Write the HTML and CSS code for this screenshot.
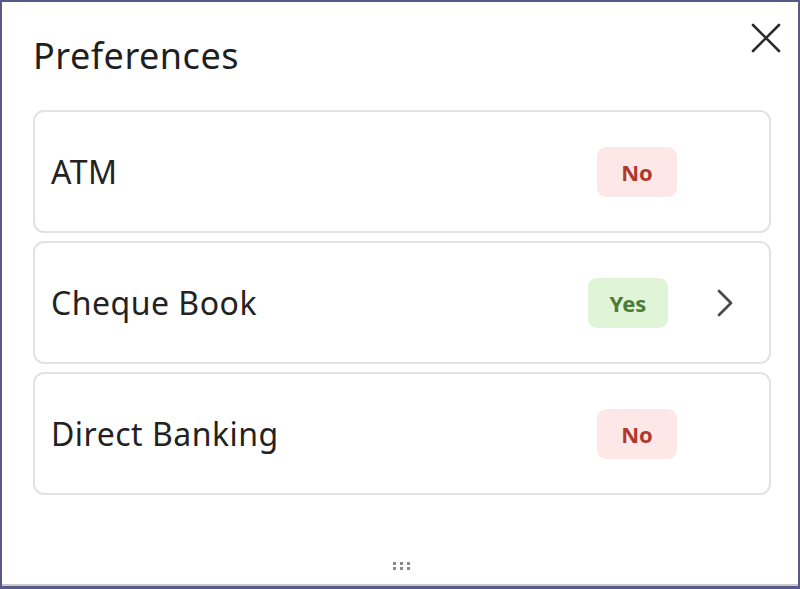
FILE: index.html
```html
<!DOCTYPE html>
<html>
<head>
<meta charset="utf-8">
<link rel="stylesheet" href="styles.css">
</head>
<body>
<div class="dialog">
  <div class="header">
    <h1 class="title">Preferences</h1>
    <button class="close" aria-label="Close">
      <svg width="30" height="30" viewBox="0 0 30 30"><path d="M2 2 L28 28 M28 2 L2 28" stroke="#2b2b2b" stroke-width="2.6" fill="none" stroke-linecap="round"/></svg>
    </button>
  </div>
  <div class="list">
    <div class="card">
      <span class="label">ATM</span>
      <span class="badge no">No</span>
      <span class="chev-slot"></span>
    </div>
    <div class="card">
      <span class="label">Cheque Book</span>
      <span class="badge yes">Yes</span>
      <span class="chev-slot wide">
        <svg width="20" height="28" viewBox="0 0 20 28"><path d="M4 2 L16 14 L4 26" stroke="#4a4a4a" stroke-width="2.8" fill="none" stroke-linecap="round" stroke-linejoin="round"/></svg>
      </span>
    </div>
    <div class="card">
      <span class="label">Direct Banking</span>
      <span class="badge no">No</span>
      <span class="chev-slot"></span>
    </div>
  </div>
  <div class="grip">
    <svg width="24" height="12" viewBox="0 0 24 12"><g fill="#8a8a8a"><rect x="3" y="2" width="3" height="3"/><rect x="3" y="7" width="3" height="3"/><rect x="10" y="2" width="3" height="3"/><rect x="10" y="7" width="3" height="3"/><rect x="17" y="2" width="3" height="3"/><rect x="17" y="7" width="3" height="3"/></g></svg>
  </div>
</div>
</body>
</html>
```

FILE: styles.css
```css
html, body {
  margin: 0;
  padding: 0;
  background: #ffffff;
}
body {
  font-family: "Noto Sans", "Open Sans", sans-serif;
  color: #222;
}
.dialog {
  box-sizing: border-box;
  width: 800px;
  height: 589px;
  border: 2px solid #565b85;
  border-bottom-width: 3px;
  display: flex;
  flex-direction: column;
  padding: 0 27px 0 31px;
  box-shadow: inset 0 -2px 0 #c9c9cf;
}
.header {
  display: flex;
  justify-content: space-between;
  align-items: flex-start;
  height: 108px;
}
.title {
  margin: 32px 0 0 0;
  font-size: 36px;
  font-weight: 400;
  letter-spacing: 0.5px;
  color: #1f1f1f;
  line-height: 44px;
}
.close {
  border: 0;
  background: none;
  padding: 0;
  margin: 21px -10px 0 0;
  width: 30px;
  height: 30px;
  cursor: pointer;
}
.list {
  display: flex;
  flex-direction: column;
  gap: 8px;
}
.card {
  box-sizing: border-box;
  height: 123px;
  border: 2px solid #e2e2e4;
  border-radius: 11px;
  display: flex;
  align-items: center;
  padding: 0 34px 0 16px;
}
.label {
  flex: 1;
  font-size: 32px;
  letter-spacing: 0.5px;
  color: #222;
}
.badge {
  width: 80px;
  height: 50px;
  border-radius: 9px;
  display: flex;
  align-items: center;
  justify-content: center;
  font-size: 22px;
  font-weight: 700;
}
.no {
  background: #fde8e7;
  color: #b0382c;
}
.yes {
  background: #e0f4d7;
  color: #4c7c37;
}
.chev-slot {
  width: 58px;
  display: flex;
  justify-content: flex-end;
  align-items: center;
}
.chev-slot.wide {
  width: 67px;
}
.grip {
  margin-top: auto;
  margin-bottom: 14px;
  display: flex;
  justify-content: center;
}
```
